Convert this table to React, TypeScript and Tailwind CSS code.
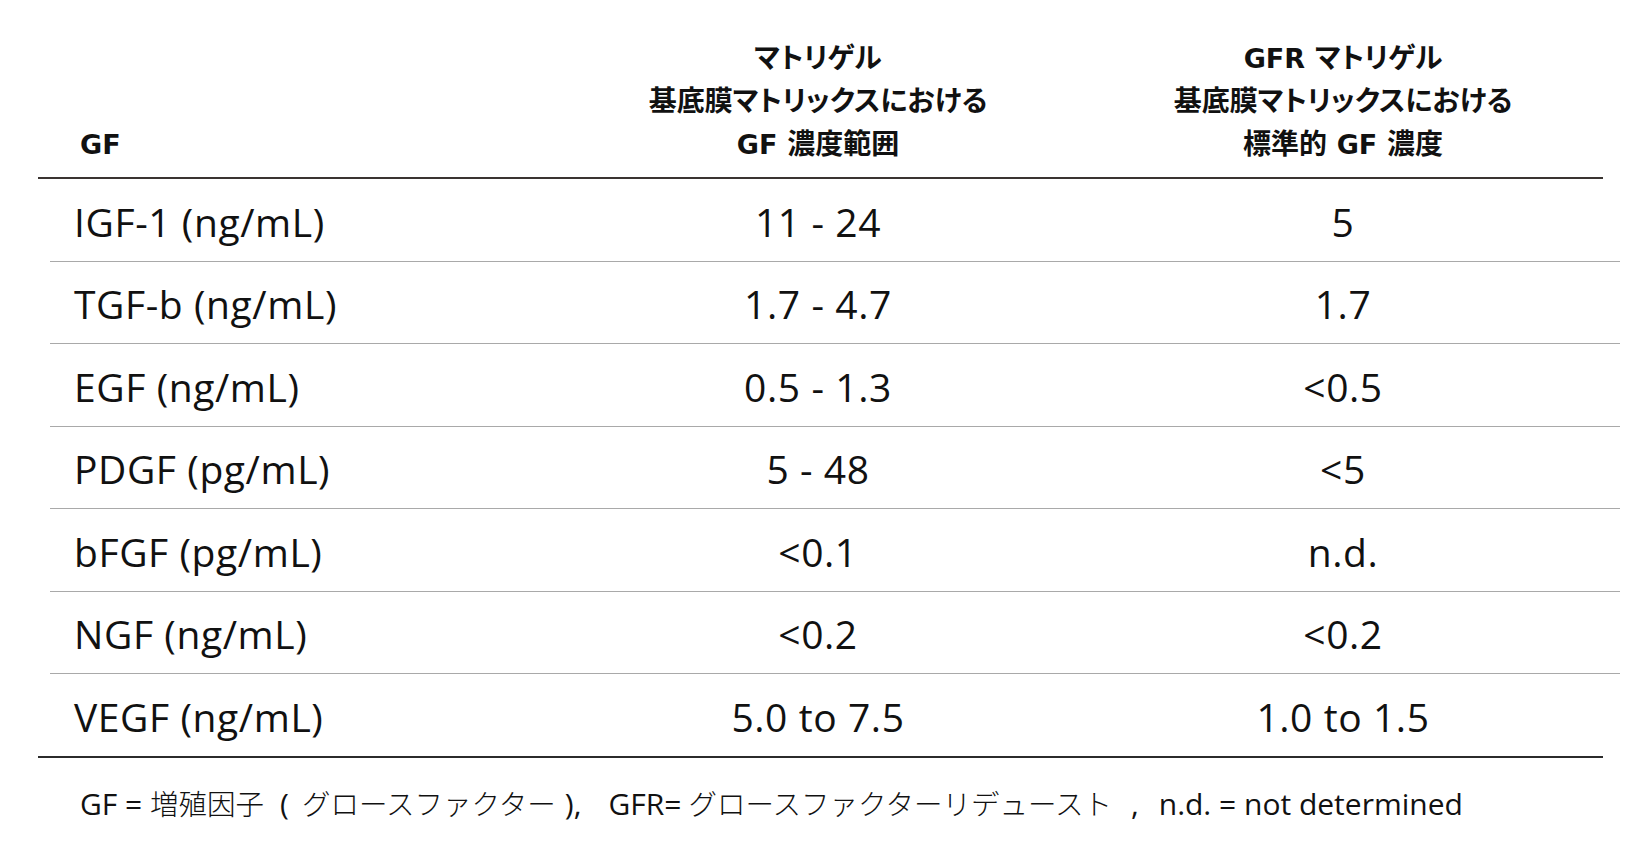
import React from "react";

const rows: [string, string, string][] = [
  ["IGF-1 (ng/mL)", "11 - 24", "5"],
  ["TGF-b (ng/mL)", "1.7 - 4.7", "1.7"],
  ["EGF (ng/mL)", "0.5 - 1.3", "<0.5"],
  ["PDGF (pg/mL)", "5 - 48", "<5"],
  ["bFGF (pg/mL)", "<0.1", "n.d."],
  ["NGF (ng/mL)", "<0.2", "<0.2"],
  ["VEGF (ng/mL)", "5.0 to 7.5", "1.0 to 1.5"],
];

const latin = "font-['Open_Sans','Noto_Sans_CJK_JP',sans-serif]";
const head = "font-['DejaVu_Sans','Noto_Sans_CJK_JP',sans-serif]";

export default function App() {
  return (
    <div className="w-[1638px] h-[854px] bg-white text-[#111] overflow-hidden">
      {/* header */}
      <div
        className={`pl-[50px] pt-[37px] pb-[11px] grid grid-cols-[520px_496px_554px] items-end text-[28px] font-bold leading-[43px] [font-feature-settings:'palt'] ${head}`}
      >
        <div className="pl-[30px] text-[27px]">GF</div>
        <div className="text-center">
          <div>マトリゲル</div>
          <div>基底膜マトリックスにおける</div>
          <div>
            <span className="text-[27px]">GF</span> 濃度範囲
          </div>
        </div>
        <div className="text-center">
          <div>
            <span className="text-[27px]">GFR</span> マトリゲル
          </div>
          <div>基底膜マトリックスにおける</div>
          <div>
            標準的 <span className="text-[27px]">GF</span> 濃度
          </div>
        </div>
      </div>
      <div className="ml-[38px] w-[1565px] h-[2px] bg-[#3a3431]" />

      {/* body */}
      <div className={`ml-[50px] w-[1570px] ${latin} text-[39px] tracking-[0.015em]`}>
        {rows.map((r, i) => (
          <div key={r[0]}>
            <div className="h-[81.5px] grid grid-cols-[520px_496px_554px] items-center pt-[3px] leading-none">
              <div className="pl-[24px]">{r[0]}</div>
              <div className="text-center">{r[1]}</div>
              <div className="text-center">{r[2]}</div>
            </div>
            {i < rows.length - 1 && <div className="h-px bg-[#a9a9a9]" />}
          </div>
        ))}
      </div>
      <div className="ml-[38px] w-[1565px] h-[2px] bg-[#2b2b2b]" />

      {/* footnote */}
      <div
        className={`mt-[26px] pl-[80px] flex items-baseline whitespace-pre text-[30px] leading-[40px] ${latin}`}
      >
        <span>GF = </span>
        <span className="font-light text-[28.5px]">増殖因子</span>
        <span className="ml-[16px]">(</span>
        <span className="ml-[13px] font-light text-[28.5px]">グロースファクター</span>
        <span className="ml-[9px]">),</span>
        <span className="ml-[27px]">GFR=</span>
        <span className="ml-[7px] font-light text-[28.5px]">グロースファクターリデュースト</span>
        <span className="ml-[19px]">,</span>
        <span className="ml-[20px]">n.d. = not determined</span>
      </div>
    </div>
  );
}
